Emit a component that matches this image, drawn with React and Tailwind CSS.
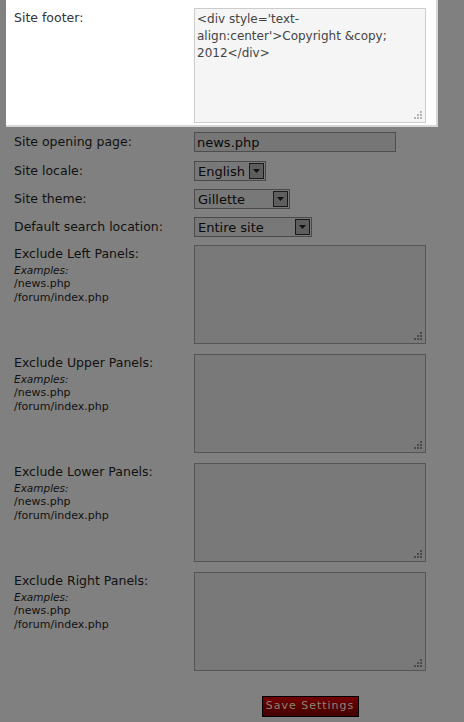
import React from "react";

const font = { fontFamily: '"DejaVu Sans", Verdana, sans-serif' };

function Grip({ color }) {
  return (
    <svg width="10" height="10" viewBox="0 0 10 10" className="absolute right-[2px] bottom-[2px]">
      {[
        [7, 1],
        [4, 4],
        [7, 4],
        [1, 7],
        [4, 7],
        [7, 7],
      ].map(([x, y], i) => (
        <rect key={i} x={x} y={y} width="2" height="2" fill={color} />
      ))}
    </svg>
  );
}

function Select({ value, width }) {
  return (
    <div
      className="relative flex h-[20px] items-center border border-[#4a4a4a] bg-[#787878] pl-[3px] text-[13px] text-[#0a0a0a]"
      style={{ width }}
    >
      <span className="leading-none">{value}</span>
      <span className="absolute right-[1px] top-[1px] flex h-[16px] w-[15px] items-center justify-center border border-[#1a1a1a] bg-[#5e5e5e]">
        <svg width="7" height="4" viewBox="0 0 7 4">
          <path d="M0 0H7L3.5 4Z" fill="#111" />
        </svg>
      </span>
    </div>
  );
}

function ExcludeRow({ title, first }) {
  return (
    <div className={`flex ${first ? "mt-[8px]" : "mt-[10px]"}`}>
      <div className="w-[180px] pt-[1px] text-[#111]">
        <div className="text-[12.5px] leading-[16px]">{title}</div>
        <div className="mt-[2px] text-[10.5px] italic leading-[13px]">Examples:</div>
        <div className="text-[11px] leading-[14px]">/news.php</div>
        <div className="text-[11px] leading-[14px]">/forum/index.php</div>
      </div>
      <div className="relative h-[99px] w-[232px] border border-[#555] bg-[#797979]">
        <Grip color="#4a4a4a" />
      </div>
    </div>
  );
}

export default function App() {
  return (
    <div className="h-[722px] w-[464px] overflow-hidden bg-[#808080]" style={font}>
      <div className="ml-[6px] flex h-[127px] w-[432px] border-b-2 border-r-2 border-[#d6d6d6] bg-white pl-[8px] pt-[8px]">
        <div className="w-[180px] pt-[2px] text-[12.5px] leading-[16px] text-[#333]">Site footer:</div>
        <div className="relative h-[115px] w-[232px] border border-[#cccccc] bg-[#f5f5f5] px-[2px] pt-[2px] text-[12px] leading-[17px] text-[#444]">
          &lt;div style='text-
          <br />
          align:center'&gt;Copyright &amp;copy;
          <br />
          2012&lt;/div&gt;
          <Grip color="#b4b4b4" />
        </div>
      </div>

      <div className="pl-[14px] text-[12.5px] text-[#111]">
        <div className="mt-[5px] flex h-[20px] items-center">
          <div className="w-[180px] leading-none">Site opening page:</div>
          <div className="flex h-[20px] w-[202px] items-center border border-[#4e4e4e] bg-[#767676] pl-[2px] text-[13px] leading-none text-[#0a0a0a]">
            news.php
          </div>
        </div>
        <div className="mt-[9px] flex h-[20px] items-center">
          <div className="w-[180px] leading-none">Site locale:</div>
          <Select value="English" width={72} />
        </div>
        <div className="mt-[8px] flex h-[20px] items-center">
          <div className="w-[180px] leading-none">Site theme:</div>
          <Select value="Gillette" width={96} />
        </div>
        <div className="mt-[8px] flex h-[20px] items-center">
          <div className="w-[180px] leading-none">Default search location:</div>
          <Select value="Entire site" width={118} />
        </div>

        <ExcludeRow title="Exclude Left Panels:" first />
        <ExcludeRow title="Exclude Upper Panels:" />
        <ExcludeRow title="Exclude Lower Panels:" />
        <ExcludeRow title="Exclude Right Panels:" />

        <div className="mt-[25px] flex">
          <div className="w-[180px]" />
          <div className="flex w-[232px] justify-center">
            <button className="h-[21px] w-[97px] border border-black bg-gradient-to-b from-[#740000] to-[#420000] text-[11px] tracking-[1px] text-[#8a8676]">
              Save Settings
            </button>
          </div>
        </div>
      </div>
    </div>
  );
}
